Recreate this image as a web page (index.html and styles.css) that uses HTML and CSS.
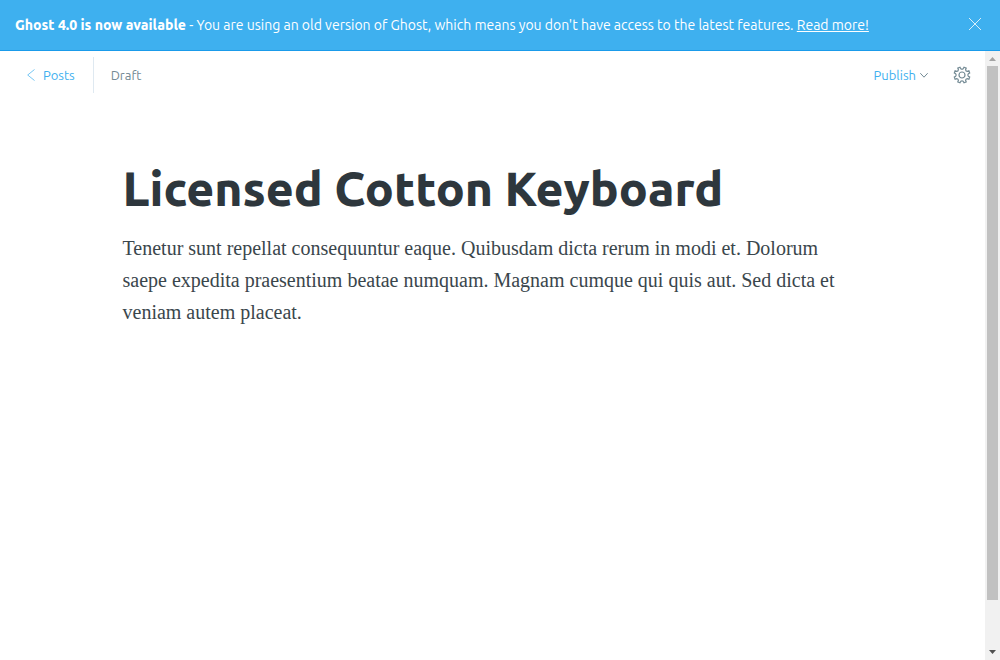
FILE: index.html
```html
<!DOCTYPE html>
<html lang="en">
<head>
<meta charset="utf-8">
<meta name="viewport" content="width=device-width, initial-scale=1">
<title>Ghost Editor</title>
<link rel="stylesheet" href="styles.css">
</head>
<body>
<div class="app">
  <aside class="banner">
    <p class="banner-text"><strong class="banner-lead">Ghost 4.0 is now available</strong> - You are using an old version of Ghost, which means you don't have access to the latest features. <a class="banner-link" href="#">Read more!</a></p>
    <button class="icon-button banner-close" type="button" aria-label="Close">
      <svg width="14" height="14" viewBox="0 0 14 14" aria-hidden="true"><path d="M1 1l12 12M13 1L1 13"/></svg>
    </button>
  </aside>
  <div class="workspace">
    <div class="editor">
      <header class="toolbar">
        <a class="back" href="#">
          <svg width="8" height="12" viewBox="0 0 8 12" aria-hidden="true"><path d="M7.500.5L.7 6l6.800 5.500"/></svg>
          Posts
        </a>
        <span class="status">Draft</span>
        <button class="publish" type="button">
          Publish
          <svg width="8" height="6" viewBox="0 0 8 6" aria-hidden="true"><path d="M.3 1.200L4 5.200 7.700 1.200"/></svg>
        </button>
        <button class="icon-button settings" type="button" aria-label="Settings">
          <svg width="18" height="18" viewBox="-9 -9 18 18" aria-hidden="true"><path d="M7.700-2L6.300-1.200Q5.300 0 6.300 1.200L7.700 2L6.900 4.200L5.300 3.600Q3.700 3.700 3.600 5.300L4.200 6.900L2 7.700L1.200 6.300Q0 5.300-1.200 6.300L-2 7.700L-4.200 6.900L-3.600 5.300Q-3.700 3.700-5.300 3.600L-6.900 4.200L-7.700 2L-6.300 1.200Q-5.300 0-6.300-1.200L-7.700-2L-6.900-4.200L-5.300-3.600Q-3.700-3.700-3.600-5.300L-4.200-6.900L-2-7.700L-1.200-6.300Q0-5.300 1.200-6.300L2-7.700L4.200-6.900L3.600-5.300Q3.700-3.700 5.300-3.600L6.900-4.200Z"/><circle r="3"/></svg>
        </button>
      </header>
      <main class="post">
        <h1 class="post-title">Licensed Cotton Keyboard</h1>
        <p class="post-body">Tenetur sunt repellat consequuntur eaque. Quibusdam dicta rerum in modi et. Dolorum saepe expedita praesentium beatae numquam. Magnam cumque qui quis aut. Sed dicta et veniam autem placeat.</p>
      </main>
    </div>
    <div class="scrollbar" aria-hidden="true">
      <svg class="scroll-up" width="15" height="15" viewBox="0 0 15 15"><path d="M4 10h7L7.500 6z"/></svg>
      <div class="scroll-track"><div class="scroll-thumb"></div></div>
      <svg class="scroll-down" width="15" height="15" viewBox="0 0 15 15"><path d="M4 5h7l-3.500 4z"/></svg>
    </div>
  </div>
</div>
</body>
</html>
```
FILE: styles.css
```css
* { box-sizing: border-box; }

body {
  margin: 0;
  background: #fff;
  color: #2e373d;
  font-family: Ubuntu, "Noto Sans", sans-serif;
  font-size: 13px;
}

svg { display: block; fill: none; stroke: currentColor; }

button {
  padding: 0;
  border: 0;
  background: none;
  font: inherit;
}

.app { display: flex; flex-direction: column; min-height: 100vh; }

.banner {
  display: flex;
  align-items: center;
  justify-content: space-between;
  padding: 14px 16px 14px 15px;
  border-bottom: 1px solid #1a9bea;
  background: #3eb0ef;
  color: #fff;
}

.banner-text { margin: 0; font-size: 14px; line-height: 22px; }
.banner-lead { font-weight: 800; }
.banner-link { color: inherit; }
.banner-close { padding: 1px 2px 3px; color: #fff; }
.banner-close svg { opacity: .8; }

.workspace { display: flex; flex: 1; }
.editor { flex: 1; min-width: 0; }

.toolbar {
  display: flex;
  align-items: center;
  padding: 6px 14px 0 27px;
  line-height: 20px;
}

.back {
  display: flex;
  align-items: center;
  gap: 8px;
  padding: 8px 18px 8px 0;
  border-right: 1px solid #dfe9f1;
  color: #3eb0ef;
  text-decoration: none;
}

.back svg { opacity: .7; }
.status { margin-left: 17px; color: #738a94; }

.publish {
  display: flex;
  align-items: center;
  gap: 4px;
  margin-left: auto;
  color: #3eb0ef;
  line-height: 20px;
}

.publish svg { color: #738a94; }
.settings { margin-left: 25px; color: #738a94; }
.settings svg { stroke-width: 1.2; }

.post { max-width: 740px; margin: 0 auto; padding: 65px 0; }

.post-title {
  margin: 0;
  font-size: 48px;
  font-weight: 800;
  line-height: 60px;
}

.post-body {
  margin: 14px 0 0;
  color: #3a464c;
  font-family: "Liberation Serif", serif;
  font-size: 20px;
  line-height: 32px;
}

.scrollbar {
  display: flex;
  flex-direction: column;
  width: 15px;
  background: #f1f1f1;
}

.scroll-track { flex: 1; padding: 0 2px; }
.scroll-thumb { height: 92.3%; background: #c1c1c1; }
.scrollbar svg { stroke: none; }
.scroll-up { fill: #a3a3a3; }
.scroll-down { fill: #505050; }
```
